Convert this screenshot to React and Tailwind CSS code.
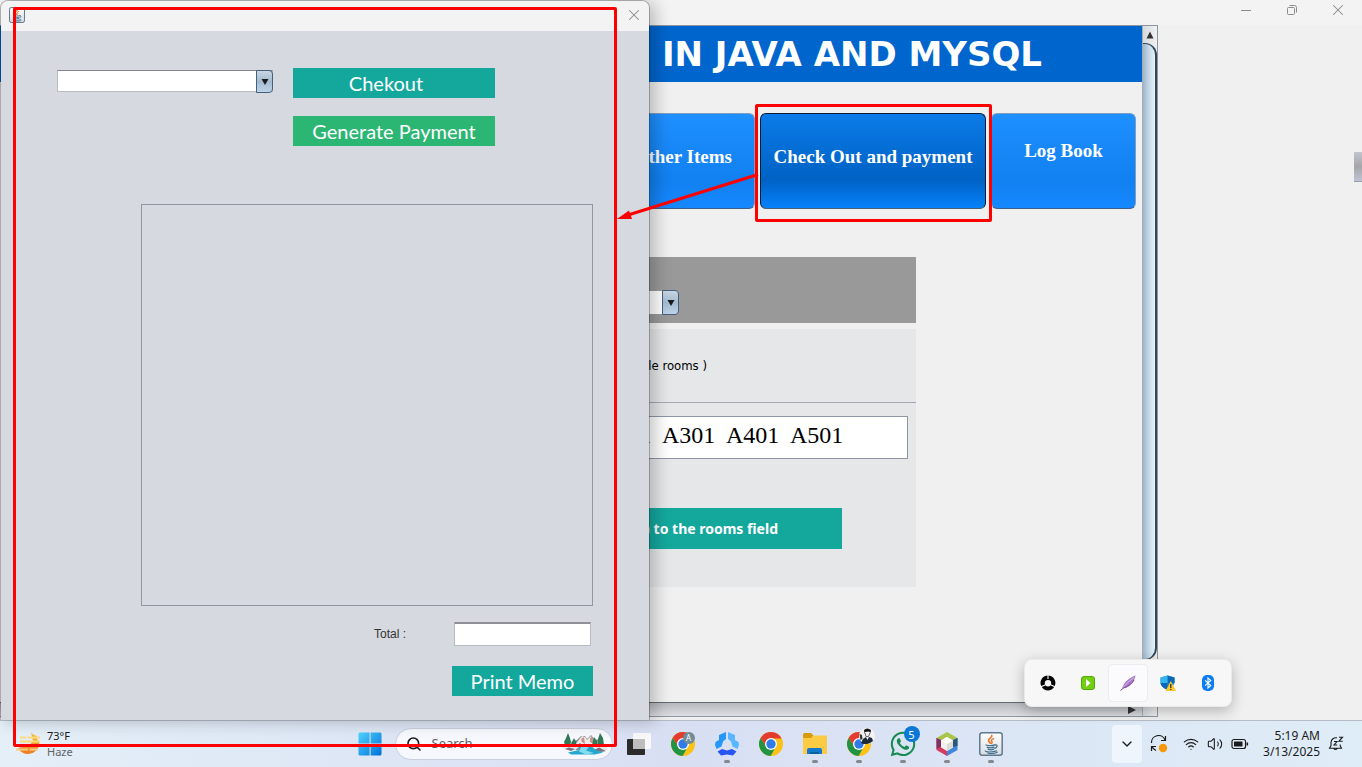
import React from "react";
import { ChevronDown, Search, Volume2, Wifi, X } from "lucide-react";
import { FaWhatsapp } from "react-icons/fa";

function ChromeIcon() {
  return (
    <svg viewBox="0 0 24 24" className="size-6" aria-hidden="true">
      <circle cx="12" cy="12" r="12" fill="#fbc116" />
      <path d="M12 6.5 L22.6 6.5 A12 12 0 0 0 1.6 6 L7.2 14.7 Z" fill="#e33b2e" />
      <path d="M1.6 6 A12 12 0 0 0 11.6 24 L16.8 14.8 L12 17.5 L7.3 14.8 Z" fill="#229342" />
      <circle cx="12" cy="12" r="6" fill="#fff" />
      <circle cx="12" cy="12" r="4.7" fill="#2f7ce8" />
    </svg>
  );
}

function JavaIcon({ className }) {
  return (
    <svg viewBox="0 0 24 24" className={className} aria-hidden="true">
      <defs>
        <linearGradient id="javaTile" x1="0" y1="0" x2="0" y2="1">
          <stop offset="0" stopColor="#ffffff" />
          <stop offset="1" stopColor="#d9dde2" />
        </linearGradient>
      </defs>
      <rect x="0.8" y="0.8" width="22.4" height="22.4" rx="2.5" fill="url(#javaTile)" stroke="#60798f" strokeWidth="1.5" />
      <g fill="none" strokeLinecap="round">
        <path d="M12.8 3.4 C13.8 5.5 9 6.5 9.5 8.6 C9.8 9.8 11 10.2 11.3 11.2" stroke="#e8762c" strokeWidth="1.7" />
        <path d="M14.8 6.6 C12.5 7.5 11.8 8.6 12.8 9.4 C13.4 10 13.2 10.7 12.6 11.2" stroke="#e8762c" strokeWidth="1.4" />
        <path d="M7 13 C10 13.9 13.5 13.7 15.4 12.9 M16 13 C18.9 12.2 18.8 15.5 15.8 16.3 M8.2 15.2 C10.5 16.1 13 16 15 15.2 M9 17.2 C10.8 18 13 17.9 14.6 17.2" stroke="#3f6f90" strokeWidth="1.3" />
        <path d="M6.2 18.8 C6 20.2 14 20.6 17.6 18.8 M9 21.2 C12.5 21.8 16.5 21.2 18.2 20.2" stroke="#3f6f90" strokeWidth="1.1" />
      </g>
    </svg>
  );
}

function HazeIcon() {
  return (
    <svg viewBox="0 0 24 24" className="size-6" aria-hidden="true">
      <defs>
        <linearGradient id="hazeSun" x1="0" y1="0" x2="0" y2="1">
          <stop offset="0" stopColor="#f9c440" />
          <stop offset="1" stopColor="#f0791d" />
        </linearGradient>
      </defs>
      <path d="M15 0.5 L18 3 L21 4 L21 7 L23.5 10 L23 13 A11 10 0 0 1 2 16 L14 12.5 L17 9 Z" fill="url(#hazeSun)" />
      <path d="M4 5.5 H10 M11.5 5.5 H24 M4 9.5 H24" stroke="#fbdc7c" strokeWidth="2" />
      <path d="M0 17.5 H12 M13.5 17.5 H22" stroke="#f3cd8c" strokeWidth="2" />
    </svg>
  );
}

function StartIcon() {
  return (
    <svg viewBox="0 0 24 24" className="size-6" aria-hidden="true">
      <defs>
        <linearGradient id="startTiles" x1="0" y1="0" x2="1" y2="1">
          <stop offset="0" stopColor="#4fd3ff" />
          <stop offset="1" stopColor="#0070d8" />
        </linearGradient>
      </defs>
      <path d="M1.5 0.5 H11.6 V11.6 H0.5 V1.5 Z M12.6 0.5 H22.5 L23.5 1.5 V11.6 H12.6 Z M0.5 12.6 H11.6 V23.5 H1.5 L0.5 22.5 Z M12.6 12.6 H23.5 V22.5 L22.5 23.5 H12.6 Z" fill="url(#startTiles)" />
    </svg>
  );
}

function LandscapeIcon() {
  return (
    <svg viewBox="0 0 46 24" className="h-6 w-[46px]" aria-hidden="true">
      <path d="M7 16 L10 9 L15 8 L19 4 L23 4 L25 7 L29 3 L33 8 L38 7 L42 16 L30 18 H14 Z" fill="#8f8b94" />
      <path d="M12 15 L16 9 L20 4 L23 5 L25 8 L29 4 L32 10 L34 15 L28 12 L23 15 L18 11 Z" fill="#f0ecec" />
      <path d="M19 7 L22 5 L23 12 L20 10 Z M28 6 L30 5 L32 12 L28 10 Z" fill="#c79489" />
      <path d="M6 1 L8 6 L9 10 L8 13 H3 L2 10 L4 6 Z M12 6 L14 10 L14 14 H9 L10 10 Z M38 1 L41 6 L42 13 H36 L36 7 Z M32 5 L35 9 L35 13 H30 L31 9 Z" fill="#2f7a55" />
      <path d="M0 15 Q3 11 8 13 Q14 11 17 15 L13 18 L4 18 Z M29 15 Q34 11 38 13 Q44 12 46 17 L42 20 L33 18 Z" fill="#e9e7ec" />
      <path d="M3 17 L7 15.5 L13 17 L9 19 Z M32 18 L37 15.5 L44 19 L39 20 Z" fill="#77727c" />
      <path d="M17 14 Q23 12 29 14 L34 18 L41 20.5 L33 22.5 H9 L6 20.5 L17 18 Z" fill="#25a6cf" />
      <path d="M19 15 L27 15 L24 18.5 L32 21 L24 22.5 L17 19.5 Z" fill="#86dcef" />
    </svg>
  );
}

function TaskViewIcon() {
  return (
    <svg viewBox="0 0 24 24" className="size-6" aria-hidden="true">
      <rect x="6" y="1" width="18" height="16" rx="1" fill="#f8f8fa" />
      <rect x="0" y="7" width="18" height="16" rx="1" fill="#2b2b2b" />
      <rect x="6" y="7" width="12" height="10" fill="#bdbdbd" />
    </svg>
  );
}

function TriadIcon() {
  return (
    <svg viewBox="0 0 24 24" className="size-6" aria-hidden="true">
      <path d="M4 3 L11 0 V7 L8 9.5 L6.5 14.5 L1.5 17 L0 13 L0.5 10 L4 8 Z" fill="#2597f8" />
      <path d="M13 0 L20 3 V8 L23.5 10 L24 13 L22.5 17 L17.5 14.5 L16 9.5 L13 7 Z" fill="#58b7ff" />
      <path d="M2.5 19.5 L7 17 L12 18.5 L17 17 L21.5 19.5 L18 23.5 L12 22.5 L6 23.5 Z" fill="#2a55f5" />
    </svg>
  );
}

function FolderIcon() {
  return (
    <svg viewBox="0 0 24 24" className="size-6" aria-hidden="true">
      <path d="M0 3 Q0 1 1.5 1 H8 L10.5 3.5 L8 7 H0 Z" fill="#d89b0e" />
      <path d="M0 6 H8 L10.5 3.5 H24 V22 H0 Z" fill="#fccb44" />
      <path d="M4 22 V18 Q4 16 6 16 H17 Q19 16 19 18 V22 Z" fill="#1379cc" />
      <path d="M7 20 H16 V22 H7 Z" fill="#075f9f" />
    </svg>
  );
}

function CubeIcon() {
  return (
    <svg viewBox="0 0 24 24" className="size-6" aria-hidden="true">
      <path d="M12 0 L22.5 6 L17 8.5 L12 5.5 L7 8.5 L1.5 6 Z" fill="#a9c64b" />
      <path d="M22.5 6 V18 L12 24 V18.5 L17 15.5 V8.5 Z" fill="#3f86dc" />
      <path d="M22.5 6 V14 L17 15 V8.5 Z" fill="#2c5578" />
      <path d="M1.5 6 V18 L12 24 V18.5 L7 15.5 V8.5 Z" fill="#d63a63" />
      <path d="M1.5 6 V17 L7 14 V8.5 Z" fill="#7d3264" />
      <path d="M12 5 L18 8.5 V15.5 L12 19 L6 15.5 V8.5 Z" fill="#f1f1ee" />
      <path d="M12 12 L18 8.5 V15.5 L12 19 Z" fill="#ddddd8" />
      <path d="M12 5 L18 8.5 L12 12 L6 8.5 Z" fill="#fff" />
    </svg>
  );
}

function AvatarBadge() {
  return (
    <svg viewBox="0 0 16 16" className="absolute -top-1 left-[22px] size-4" aria-hidden="true">
      <circle cx="8" cy="8" r="8" fill="#f3f3f3" />
      <path d="M5 2 Q8 -1 12 2 L11.5 5 L10 3.5 L6 4 L5.5 6 Z" fill="#151515" />
      <path d="M2 15 L4 11 L7 9 L8.5 12 L10 9 L13 10 L14 13 Q8 18 2 15 Z" fill="#1d2a38" />
      <path d="M6 5 L7 8.5 H9.5 L11 5" fill="none" stroke="#444" strokeWidth="0.8" />
      <path d="M0.5 6 L3 7 L3.5 11 L1.5 12 Z" fill="#333" />
    </svg>
  );
}

function SyncIcon() {
  return (
    <svg viewBox="0 0 18 18" className="size-[18px]" fill="none" stroke="#1b1b1b" strokeWidth="1.2" aria-hidden="true">
      <path d="M1.5 8 A7 7 0 0 1 15 5 M15.5 1 V5.5 H11 M6 15.5 A7 7 0 0 1 2 11.5 M1.5 16 V11.5 H6" />
      <circle cx="13" cy="13" r="4.2" fill="#f8960c" stroke="none" />
    </svg>
  );
}

function BatteryIcon() {
  return (
    <svg viewBox="0 0 18 12" className="h-3 w-[18px]" fill="none" stroke="#1b1b1b" strokeWidth="1.2" aria-hidden="true">
      <rect x="1" y="1.5" width="13.5" height="9" rx="2" />
      <rect x="3" y="3.5" width="8.5" height="5" rx="0.6" fill="#1b1b1b" stroke="none" />
      <path d="M16.3 4.5 V7.5" strokeWidth="1.6" />
    </svg>
  );
}

function SnoozeBellIcon() {
  return (
    <svg viewBox="0 0 16 16" className="size-4" fill="none" stroke="#1b1b1b" strokeWidth="1.1" aria-hidden="true">
      <path d="M9 1.8 A5 5 0 0 0 3 6.5 V9.5 L1.5 12.3 H13.5 L12.2 9.8 V8.5 M5.8 12.5 A1.9 1.9 0 0 0 9.2 12.5 M6 5.5 H9 L6 9 H9.2 M11 1.2 H14.5 L11 5.2 H14.7" />
    </svg>
  );
}

function DropArrow() {
  return (
    <span className="pointer-events-none absolute inset-y-0 right-0 flex w-[17px] items-center justify-center rounded-r border border-[#47617c] bg-linear-to-b from-[#c9d6e3] via-[#a3bbd1] to-[#bdd3e8]">
      <svg viewBox="0 0 8 6" className="h-1.5 w-2" aria-hidden="true">
        <path d="M0.5 0 H7.5 L4 6 Z" fill="#1a1a1a" />
      </svg>
    </span>
  );
}

function WindowButton({ label, children }) {
  return (
    <button type="button" aria-label={label} className="flex w-[46px] items-center justify-center text-[#8b8b8b]">
      {children}
    </button>
  );
}

function MainWindow() {
  return (
    <main className="flex flex-1 flex-col bg-[#f0f0f0]">
      <header className="flex h-[25px] justify-end bg-[#f3f3f3] pr-px pb-[5px]">
        <WindowButton label="Minimize">
          <svg viewBox="0 0 10 10" className="size-2.5" aria-hidden="true"><path d="M0 5.5 H10" stroke="currentColor" /></svg>
        </WindowButton>
        <WindowButton label="Restore">
          <svg viewBox="0 0 10 10" className="size-2.5" fill="none" stroke="currentColor" aria-hidden="true">
            <rect x="0.5" y="2.5" width="7" height="7" rx="1" />
            <path d="M2.5 0.5 H7.5 Q9.5 0.5 9.5 2.5 V7.5" />
          </svg>
        </WindowButton>
        <WindowButton label="Close">
          <X className="size-[18px]" strokeWidth={1.4} />
        </WindowButton>
      </header>

      <div className="flex flex-1 pb-[3px]">
        <div className="flex flex-1 border-y border-r border-[#8f959e]">
          <div className="flex flex-1 flex-col">
            <section className="flex-1">
              <h1 className="flex h-14 items-center justify-end overflow-hidden bg-[#0065cc] pr-[100px] font-['DejaVu_Sans',sans-serif] text-[34px] leading-none font-bold whitespace-nowrap text-white">
                SYSTEM IN JAVA AND MYSQL
              </h1>

              <nav className="mt-[31px] flex justify-end gap-[5px] pr-1.5 font-['Liberation_Serif',serif] text-[19px] font-bold text-white">
                <button type="button" className="h-24 w-[145px] rounded-md border border-[#7f9dbd] border-b-[#3f5f86] bg-linear-to-b from-[#1e90ff] via-[#1180f0] via-70% to-[#1688ff] pr-[22px] pb-2 text-right">
                  Other Items
                </button>
                <button type="button" className="h-24 w-[226px] rounded-md border border-[#0a1c33] border-b-[#4a6078] bg-linear-to-b from-[#0c7be8] via-[#0062c4] via-70% to-[#0682fb] pb-2 text-center">
                  Check Out and payment
                </button>
                <button type="button" className="h-24 w-[145px] rounded-md border border-[#7f9dbd] border-b-[#3f5f86] bg-linear-to-b from-[#1e90ff] via-[#1180f0] via-70% to-[#1688ff] pb-5 text-center">
                  Log Book
                </button>
              </nav>

              <div className="mt-12 mr-[226px] ml-[500px]">
                <div className="h-[66px] bg-[#999] pt-[33px]">
                  <div className="relative h-[25px] w-[179px]">
                    <select aria-label="Room type" className="h-full w-full appearance-none border border-[#9a9a9a] bg-white" />
                    <DropArrow />
                  </div>
                </div>
                <div className="mt-1.5 h-[258px] bg-[#e5e7e9]">
                  <label htmlFor="rooms" className="flex h-[73px] w-[207px] items-center justify-end font-['DejaVu_Sans_Condensed','DejaVu_Sans',sans-serif] text-[13px] whitespace-nowrap text-black">
                    ( available rooms )
                  </label>
                  <div className="border-t border-[#a5a8b4] px-2 pt-[13px]">
                    <input
                      id="rooms"
                      defaultValue="A101  A201  A301  A401  A501"
                      className="h-[43px] w-full border border-[#8f95a3] bg-white pb-1 pl-[25px] font-['Liberation_Serif',serif] text-[24px] text-black"
                    />
                  </div>
                  <button type="button" className="mt-[49px] ml-10 flex h-[41px] w-[302px] items-center justify-end bg-[#14a89d] pr-16 font-['Noto_Sans',sans-serif] text-[14px] font-bold text-white">
                    ( Add ) to the rooms field
                  </button>
                </div>
              </div>
            </section>
            <div className="flex h-3.5 items-center justify-end border-t border-[#66696f] bg-linear-to-b from-[#b5b8bd] to-[#dcdee2] pr-1.5">
              <svg viewBox="0 0 8 8" className="size-2" aria-hidden="true"><path d="M0 0 L8 4 L0 8 Z" fill="#333" /></svg>
            </div>
          </div>
          <div className="flex w-[15px] flex-col border-l border-[#a9adb5] bg-linear-to-r from-[#d6dade] to-[#f1f1f1]">
            <div className="flex h-[17px] items-center justify-center">
              <svg viewBox="0 0 8 8" className="size-2" aria-hidden="true"><path d="M4 0.5 L7.5 7.5 H0.5 Z" fill="#333" /></svg>
            </div>
            <div className="flex-1 rounded-r-xl border-t border-r-2 border-b border-[#33475a] bg-linear-to-r from-[#9fb5cb] via-[#c5d9e8] to-[#e6f4fb]" />
            <div className="h-14" />
          </div>
        </div>
        <aside className="flex w-[204px] items-start justify-end pt-[127px]">
          <div className="h-[30px] w-2 border-b border-[#9c9ea8] bg-linear-to-b from-[#c3c5cd] via-[#a6a6a8] to-[#bfc3d3]" />
        </aside>
      </div>
    </main>
  );
}

function CheckoutDialog() {
  return (
    <section
      aria-label="Checkout"
      className="absolute top-0 bottom-[47px] left-0 flex w-[650px] flex-col overflow-hidden rounded-t-lg border border-b-0 border-black/25 bg-[#d6d9e0] bg-clip-padding shadow-[6px_2px_16px_rgba(0,0,0,0.22)]"
    >
      <div className="flex h-[30px] items-center justify-between bg-[#f3f3f3] pr-1.5 pb-0.5 pl-2">
        <JavaIcon className="size-4" />
        <button type="button" aria-label="Close dialog" className="text-[#8b8b8b]">
          <X className="size-[18px]" strokeWidth={1.4} />
        </button>
      </div>
      <form className="pt-[37px] pl-14 font-['Lato',sans-serif] text-white" onSubmit={(e) => e.preventDefault()}>
        <div className="flex gap-5">
          <div className="relative mt-0.5 h-[23px] w-[216px]">
            <select aria-label="Room" className="h-[22px] w-full appearance-none border border-[#b9bbc0] border-t-[#85878c] bg-white" />
            <DropArrow />
          </div>
          <div className="flex w-[202px] flex-col gap-[18px] text-[20px] leading-[30px]">
            <button type="button" className="h-[30px] bg-[#14a89d] pr-4">Chekout</button>
            <button type="button" className="h-[30px] bg-[#2cb673]">Generate Payment</button>
          </div>
        </div>
        <div className="mt-[58px] ml-[84px] flex w-[452px] flex-col items-end">
          <textarea aria-label="Memo" className="h-[402px] w-full resize-none border border-[#93969f] bg-transparent" />
          <div className="mt-4 mr-0.5 flex items-center gap-12">
            <label htmlFor="total" className="font-['Liberation_Sans',sans-serif] text-[12px] text-[#333]">Total :</label>
            <input id="total" className="h-6 w-[137px] border border-[#b9bbc0] border-t-2 border-t-[#8f9196] bg-white" />
          </div>
          <button type="button" className="mt-5 h-[30px] w-[141px] bg-[#14a89d] text-[20px] leading-[30px]">Print Memo</button>
        </div>
      </form>
    </section>
  );
}

function TaskApp({ label, running, children }) {
  return (
    <button type="button" aria-label={label} className="relative flex w-11 items-center justify-center">
      <span className="relative flex w-11 justify-center">{children}</span>
      {running && <span className="absolute bottom-1 left-[19px] h-[3px] w-1.5 rounded-full bg-[#85878f]" />}
    </button>
  );
}

function Taskbar() {
  return (
    <footer className="grid h-[47px] grid-cols-[1fr_auto_1fr] border-t border-[#b5bcc6] bg-linear-to-r from-[#e4eff8] via-[#d8dff3] to-[#dfedf7] font-['Noto_Sans',sans-serif] text-[11px] text-[#1b1b1b]">
      <div className="flex items-center gap-[7px] pl-4">
        <HazeIcon />
        <div className="leading-4">
          <p>73°F</p>
          <p className="text-[#606468]">Haze</p>
        </div>
      </div>

      <div className="flex pr-0.5">
        <TaskApp label="Start"><StartIcon /></TaskApp>
        <label className="mt-[7px] mr-1 ml-[3px] flex h-8 w-[218px] items-center rounded-full border border-[#c9cfdc] bg-[#f6f8fd] pr-1 pl-2.5">
          <Search className="size-4" strokeWidth={2.4} />
          <input aria-label="Search" placeholder="Search" className="ml-2.5 w-0 flex-1 bg-transparent text-[13px] outline-none placeholder:text-[#5d5f66]" />
          <LandscapeIcon />
        </label>
        <TaskApp label="Task view"><TaskViewIcon /></TaskApp>
        <TaskApp label="Chrome, profile A">
          <ChromeIcon />
          <span className="absolute top-0 left-[22px] flex size-3 items-center justify-center rounded-full bg-[#6f8c99] text-[8px] leading-none text-white">A</span>
        </TaskApp>
        <TaskApp label="Task tracker" running><TriadIcon /></TaskApp>
        <TaskApp label="Chrome"><ChromeIcon /></TaskApp>
        <TaskApp label="File Explorer" running><FolderIcon /></TaskApp>
        <TaskApp label="Chrome, second profile" running>
          <ChromeIcon />
          <AvatarBadge />
        </TaskApp>
        <TaskApp label="WhatsApp" running>
          <FaWhatsapp className="size-7 text-[#178a50]" />
          <span className="absolute -top-1 left-[23px] flex size-4 items-center justify-center rounded-full bg-[#0b78d4] text-[11px] leading-none text-white">5</span>
        </TaskApp>
        <TaskApp label="NetBeans" running><CubeIcon /></TaskApp>
        <TaskApp label="Java" running><JavaIcon className="size-6" /></TaskApp>
      </div>

      <div className="flex items-center justify-end pr-[18px]">
        <button type="button" aria-label="Show hidden icons" className="mr-2 flex h-[38px] w-[30px] items-center justify-center rounded bg-[#eff5fd]">
          <ChevronDown className="size-4" strokeWidth={2} />
        </button>
        <SyncIcon />
        <Wifi className="ml-[15px] size-4" strokeWidth={1.8} />
        <Volume2 className="ml-2 size-4" strokeWidth={1.6} />
        <span className="ml-2"><BatteryIcon /></span>
        <div className="ml-3.5 text-right text-[12px] leading-4">
          <p>5:19 AM</p>
          <p>3/13/2025</p>
        </div>
        <span className="ml-2"><SnoozeBellIcon /></span>
      </div>
    </footer>
  );
}

function TrayFlyout() {
  return (
    <div className="absolute right-[130px] bottom-[60px] flex rounded-lg border border-black/5 bg-[#f7f7f8] px-[3px] py-1 shadow-[0_4px_14px_rgba(0,0,0,0.25)]">
      <button type="button" aria-label="Sync client" className="flex h-[38px] w-10 items-center justify-center">
        <svg viewBox="0 0 16 16" className="size-4" aria-hidden="true">
          <path d="M8 1.8 A6.2 6.2 0 1 1 7.9 1.8 Z M8 4.8 A3.4 3.4 0 1 0 8.1 4.8 Z" fill="#050505" fillRule="evenodd" stroke="#050505" strokeWidth="2.4" strokeLinejoin="round" />
          <circle cx="8" cy="8.2" r="3.2" fill="#f7f7f8" />
          <path d="M8 0 V4 M0 12.2 L5 10 M16 12.2 L11 10" stroke="#f7f7f8" strokeWidth="1.1" />
        </svg>
      </button>
      <button type="button" aria-label="Media helper" className="flex h-[38px] w-10 items-center justify-center">
        <svg viewBox="0 0 14 14" className="size-3.5" aria-hidden="true">
          <rect x="0.5" y="0.5" width="13" height="13" rx="2.5" fill="#72ce10" stroke="#55a60b" />
          <path d="M5 3 V11 L9.5 7 Z" fill="#fff" />
        </svg>
      </button>
      <button type="button" aria-label="Quill" className="flex h-[38px] w-10 items-center justify-center rounded border border-[#ececf0] bg-[#fbfafd]">
        <svg viewBox="0 0 16 16" className="size-4" aria-hidden="true">
          <path d="M15.5 0.5 C10 2.5 4 6.5 2 13.5 C7.5 13 14 9 15.5 0.5 Z" fill="#a678c6" />
          <path d="M3 12.5 C7 8 10 5.5 14 2.5" stroke="#e6d6f0" strokeWidth="0.8" fill="none" />
          <path d="M0.5 15.5 L3.5 13 C9 11.5 12.5 8 14 5" stroke="#7c4a9c" strokeWidth="1" fill="none" />
        </svg>
      </button>
      <button type="button" aria-label="Windows Security" className="flex h-[38px] w-10 items-center justify-center">
        <svg viewBox="0 0 16 16" className="size-4" aria-hidden="true">
          <path d="M7.5 0.5 L14.5 2.5 V8 Q13 12.5 7.5 15 Q1 12 0.5 8 V2.5 Z" fill="#1487d6" />
          <path d="M7.5 0.5 L14.5 2.5 V8 H7.5 Z M7.5 8 V15 Q1 12 0.5 8 Z" fill="#0c68b4" />
          <path d="M7.5 0.5 V8 H0.5 V2.5 Z" fill="#35b5f0" />
          <path d="M10.8 6 L16 16 H5.5 Z" fill="#ffc627" />
          <path d="M10.8 9 V13 M10.8 14 V15" stroke="#222" strokeWidth="1.2" />
        </svg>
      </button>
      <button type="button" aria-label="Bluetooth" className="flex h-[38px] w-10 items-center justify-center">
        <svg viewBox="0 0 12 16" className="h-4 w-3" aria-hidden="true">
          <rect width="12" height="16" rx="5" fill="#0a7cf5" />
          <path d="M3 5.3 L8.8 10.5 L6 13 V3 L8.8 5.5 L3 10.7" fill="none" stroke="#fff" strokeWidth="1.1" />
        </svg>
      </button>
    </div>
  );
}

function Annotations() {
  return (
    <div className="pointer-events-none absolute inset-0" aria-hidden="true">
      <div className="absolute top-[7px] left-[13px] h-[740px] w-[604px] rounded-xs border-3 border-[#fe0000]" />
      <div className="absolute top-[104px] left-[755px] h-[118px] w-[237px] rounded-xs border-3 border-[#fe0000]" />
      <svg viewBox="0 0 144 50" className="absolute top-[172px] left-[616px] h-[50px] w-36">
        <path d="M142 2.5 L12 43" stroke="#fe0000" strokeWidth="3" />
        <path d="M1 47 L13 38.5 L16 47 Z" fill="#fe0000" />
      </svg>
    </div>
  );
}

export default function App() {
  return (
    <div className="relative flex min-h-screen flex-col overflow-hidden">
      <MainWindow />
      <Taskbar />
      <CheckoutDialog />
      <TrayFlyout />
      <Annotations />
    </div>
  );
}
